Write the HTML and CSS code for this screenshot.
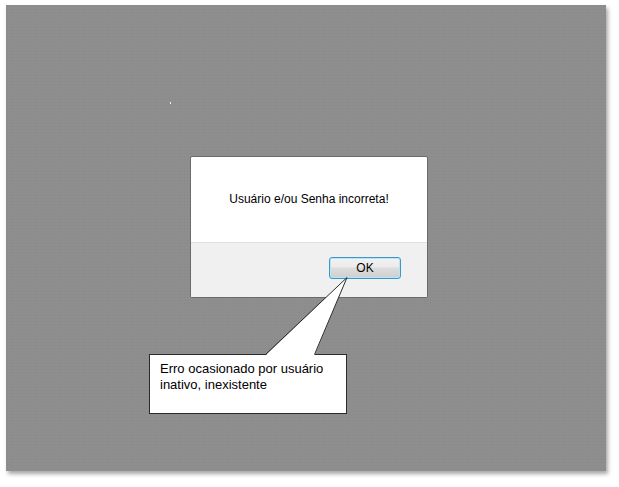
FILE: index.html
```html
<!DOCTYPE html>
<html>
<head>
<meta charset="utf-8">
<link rel="stylesheet" href="styles.css">
</head>
<body>
<div class="stage">
  <div class="canvas">
    <span class="speck"></span>
    <div class="dialog">
      <div class="dialog-body">Usuário e/ou Senha incorreta!</div>
      <div class="dialog-foot"><button class="ok">OK</button></div>
    </div>
  </div>
  <div class="callout">Erro ocasionado por usuário inativo, inexistente</div>
  <svg class="pointer" width="619" height="487" viewBox="0 0 619 487">
    <polygon points="265.5,355.5 347,277.5 314.5,355.5" fill="#fff"/>
    <polyline points="265.5,354.5 347,277.5 314.5,354.5" fill="none" stroke="#2b2b2b" stroke-width="1"/>
  </svg>
</div>
</body>
</html>
```
FILE: styles.css
```css
html, body {
  margin: 0;
  padding: 0;
  background: #ffffff;
}
body {
  width: 619px;
  height: 487px;
  font-family: "Liberation Sans", Arial, sans-serif;
}
.stage {
  position: relative;
  width: 619px;
  height: 487px;
  padding: 5px 0 0 6px;
  box-sizing: border-box;
}
.canvas {
  width: 600px;
  height: 466px;
  background-color: #8e8e8e;
  background-image: radial-gradient(#888888 0.6px, transparent 0.8px);
  background-size: 3px 3px;
  box-shadow: 2px 3px 4px rgba(0,0,0,0.35);
  padding: 151px 0 0 184px;
  box-sizing: border-box;
  position: relative;
}
.speck {
  position: absolute;
  left: 164px;
  top: 97px;
  width: 1px;
  height: 2px;
  background: #ffffff;
}
.dialog {
  width: 238px;
  height: 142px;
  box-sizing: border-box;
  border: 1px solid #6a6a6a;
  border-radius: 2px;
  background: #ffffff;
  display: flex;
  flex-direction: column;
  overflow: hidden;
}
.dialog-body {
  height: 85px;
  display: flex;
  align-items: center;
  justify-content: center;
  font-size: 12px;
  color: #000;
  padding-bottom: 2px;
  box-sizing: border-box;
}
.dialog-foot {
  flex: 1;
  background: #f0f0f0;
  border-top: 1px solid #dfdfdf;
  display: flex;
  justify-content: flex-end;
  align-items: flex-start;
  padding: 14px 26px 0 0;
}
.ok {
  width: 72px;
  height: 22px;
  margin: 0;
  padding: 0;
  border: 1px solid #3c97cf;
  border-radius: 3px;
  background: linear-gradient(#f2f2f2 0%, #ebebeb 45%, #dddddd 50%, #cfcfcf 100%);
  box-shadow: inset 0 0 0 1px #b9e3f8;
  font-family: "Liberation Sans", Arial, sans-serif;
  font-size: 12px;
  color: #000;
}
.callout {
  position: absolute;
  left: 149px;
  top: 354px;
  width: 198px;
  height: 60px;
  box-sizing: border-box;
  border: 1px solid #2b2b2b;
  background: #ffffff;
  padding: 6px 10px 0 10px;
  font-size: 13px;
  line-height: 16px;
  color: #000;
}
.pointer {
  position: absolute;
  left: 0;
  top: 0;
  pointer-events: none;
}
```
